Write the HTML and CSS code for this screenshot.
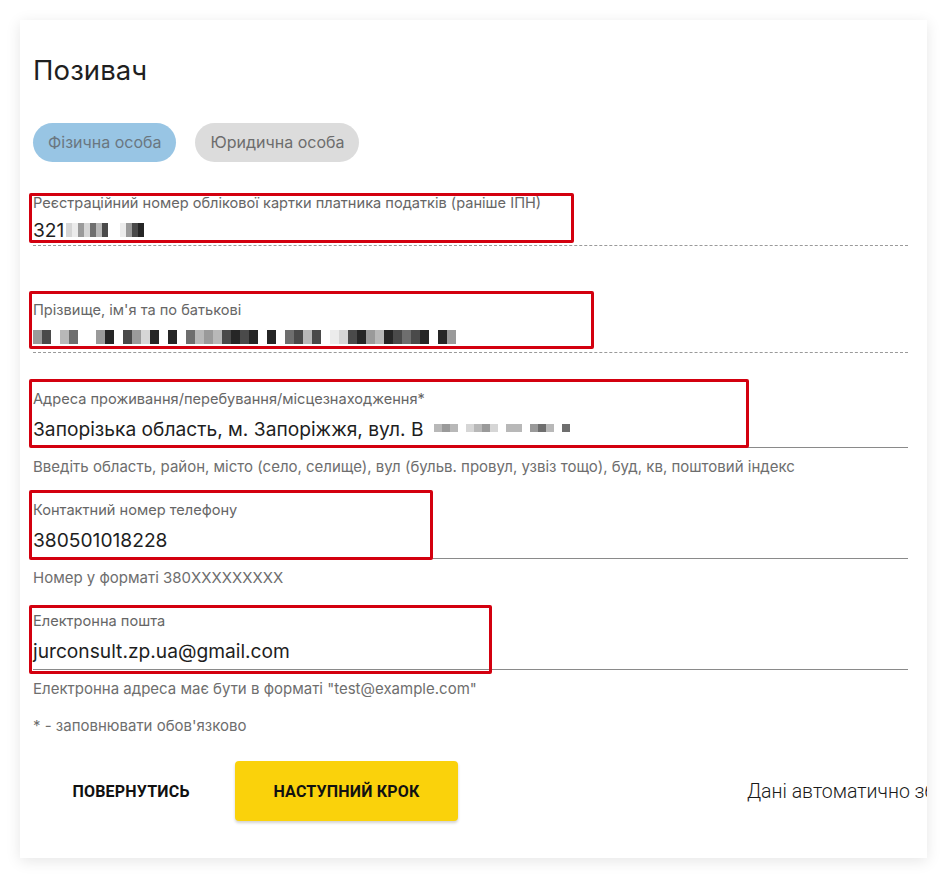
FILE: index.html
```html
<!DOCTYPE html>
<html lang="uk">
<head>
<meta charset="utf-8">
<title>Позивач</title>
<link rel="stylesheet" href="styles.css">
</head>
<body>
<main class="card">
  <h1 class="title">Позивач</h1>

  <div class="chips">
    <span class="chip chip-active">Фізична особа</span>
    <span class="chip">Юридична особа</span>
  </div>

  <div class="field field-disabled f1">
    <div class="label">Реєстраційний номер облікової картки платника податків (раніше ІПН)</div>
    <div class="value">321<span class="mosaic"><i class="c2"></i><i class="c1"></i><i class="c4"></i><i class="c2"></i><i class="c5"></i><i class="c3"></i><i class="c6"></i><i class="c0"></i><i class="c0"></i><i class="c1"></i><i class="c4"></i><i class="c6"></i><i class="c7"></i></span></div>
    <div class="mark mark-1"></div>
  </div>

  <div class="field field-disabled f2">
    <div class="label">Прізвище, ім'я та по батькові</div>
    <div class="value"><span class="mosaic mosaic-wide"><i class="c4"></i><i class="c6"></i><i class="c0"></i><i class="c3"></i><i class="c5"></i><i class="c0"></i><i class="c0"></i><i class="c4"></i><i class="c7"></i><i class="c0"></i><i class="c6"></i><i class="c4"></i><i class="c2"></i><i class="c7"></i><i class="c0"></i><i class="c7"></i><i class="c0"></i><i class="c5"></i><i class="c3"></i><i class="c4"></i><i class="c3"></i><i class="c6"></i><i class="c7"></i><i class="c6"></i><i class="c7"></i><i class="c0"></i><i class="c7"></i><i class="c0"></i><i class="c5"></i><i class="c6"></i><i class="c3"></i><i class="c6"></i><i class="c0"></i><i class="c1"></i><i class="c2"></i><i class="c6"></i><i class="c7"></i><i class="c4"></i><i class="c3"></i><i class="c7"></i><i class="c6"></i><i class="c5"></i><i class="c6"></i><i class="c7"></i><i class="c0"></i><i class="c7"></i><i class="c4"></i></span></div>
    <div class="mark mark-2"></div>
  </div>

  <div class="field f3">
    <div class="label">Адреса проживання/перебування/місцезнаходження*</div>
    <div class="value">Запорізька область, м. Запоріжжя, вул. В<span class="mosaic mosaic-light"><i class="c0"></i><i class="c3"></i><i class="c4"></i><i class="c3"></i><i class="c0"></i><i class="c2"></i><i class="c3"></i><i class="c4"></i><i class="c2"></i><i class="c0"></i><i class="c3"></i><i class="c3"></i><i class="c0"></i><i class="c4"></i><i class="c5"></i><i class="c3"></i><i class="c0"></i><i class="c5"></i></span></div>
    <div class="helper">Введіть область, район, місто (село, селище), вул (бульв. провул, узвіз тощо), буд, кв, поштовий індекс</div>
    <div class="mark mark-3"></div>
  </div>

  <div class="field f4">
    <div class="label">Контактний номер телефону</div>
    <div class="value">380501018228</div>
    <div class="helper">Номер у форматі 380XXXXXXXXX</div>
    <div class="mark mark-4"></div>
  </div>

  <div class="field f5">
    <div class="label">Електронна пошта</div>
    <div class="value">jurconsult.zp.ua@gmail.com</div>
    <div class="helper">Електронна адреса має бути в форматі "test@example.com"</div>
    <div class="mark mark-5"></div>
  </div>

  <p class="note">* - заповнювати обов'язково</p>

  <div class="actions">
    <button class="btn btn-text" type="button">Повернутись</button>
    <button class="btn btn-primary" type="button">Наступний крок</button>
    <span class="autosave">Дані автоматично збережено</span>
  </div>
</main>
</body>
</html>
```

FILE: styles.css
```css
* { box-sizing: border-box; }

html, body { background: #ffffff; }

body {
  margin: 0;
  padding: 20px 20px 21px 20px;
  font-family: Inter, "Noto Sans", sans-serif;
  color: #222;
}

.card {
  background: #fff;
  box-shadow: 0 3px 14px rgba(0, 0, 0, 0.10);
  padding: 34px 19px 37px 13px;
  overflow: hidden;
}

.title {
  margin: 0;
  font-size: 27.5px;
  line-height: 32px;
  font-weight: 400;
  color: #1f1f1f;
  letter-spacing: 0.1px;
}

.chips {
  display: flex;
  gap: 19px;
  margin-top: 37px;
}

.chip {
  height: 39px;
  line-height: 39px;
  padding: 0 15px;
  border-radius: 20px;
  background: #dcdcdc;
  color: #6d6d6d;
  font-size: 16px;
}

.chip-active {
  background: #98c5e4;
  color: #6a7781;
}

.field {
  position: relative;
}

.label {
  font-size: 14.6px;
  line-height: 20px;
  color: #666;
  white-space: nowrap;
}

.value {
  font-size: 19.2px;
  line-height: 30px;
  height: 39px;
  padding: 5px 0 3px;
  border-bottom: 1px solid #8a8a8a;
  color: #1e1e1e;
  white-space: nowrap;
  display: flex;
  align-items: center;
}

.field-disabled .value {
  padding: 4px 0 2px;
  line-height: 26px;
  height: 33px;
  border-bottom: 1px dashed #9a9a9a;
}

.helper {
  margin-top: 9px;
  font-size: 15px;
  line-height: 20px;
  color: #6e6e6e;
  white-space: nowrap;
}

.f1 { margin-top: 31px; }
.f2 { margin-top: 54px; }
.f3 { margin-top: 36px; }
.f4 { margin-top: 23px; }
.f5 { margin-top: 23px; }

.mosaic {
  display: inline-flex;
  height: 14px;
  margin-left: 2px;
}

.mosaic i {
  display: block;
  width: 6px;
  height: 14px;
}

.mosaic-wide { margin-left: 0; }
.mosaic-wide i { width: 9px; }

.mosaic-light { margin-left: 2px; height: 10px; }
.mosaic-light i { width: 8px; height: 8px; }

.c0 { background: transparent; }
.c1 { background: #ececec; }
.c2 { background: #d6d6d6; }
.c3 { background: #b8b8b8; }
.c4 { background: #9a9a9a; }
.c5 { background: #6e6e6e; }
.c6 { background: #4a4a4a; }
.c7 { background: #262626; }

.mark {
  position: absolute;
  left: -4px;
  border: 3px solid #d3000f;
  border-radius: 2px;
  pointer-events: none;
}

.mark-1 { top: 0; width: 545px; height: 50px; }
.mark-2 { top: -9px; width: 565px; height: 58px; }
.mark-3 { top: -10px; width: 720px; height: 69px; }
.mark-4 { top: -10px; width: 404px; height: 70px; }
.mark-5 { top: -6px; width: 463px; height: 69px; }

.note {
  margin: 17px 0 0;
  font-size: 15px;
  line-height: 20px;
  color: #6e6e6e;
}

.actions {
  display: flex;
  align-items: center;
  margin-top: 25px;
}

.btn {
  flex-shrink: 0;
  font-family: Roboto, "Noto Sans", sans-serif;
  font-weight: 700;
  font-size: 16px;
  text-transform: uppercase;
  letter-spacing: 0.2px;
  color: #111;
  border: 0;
  background: transparent;
  height: 60px;
  padding: 0;
  cursor: pointer;
}

.btn-text {
  width: 196px;
  margin-right: 6px;
}

.btn-primary {
  width: 223px;
  background: #fad20b;
  border-radius: 4px;
  box-shadow: 0 2px 3px rgba(0, 0, 0, 0.18);
}

.autosave {
  margin-left: 289px;
  flex-shrink: 0;
  white-space: nowrap;
  font-family: Roboto, "Noto Sans", sans-serif;
  font-weight: 300;
  font-size: 19.5px;
  color: #1a1a1a;
}
```
